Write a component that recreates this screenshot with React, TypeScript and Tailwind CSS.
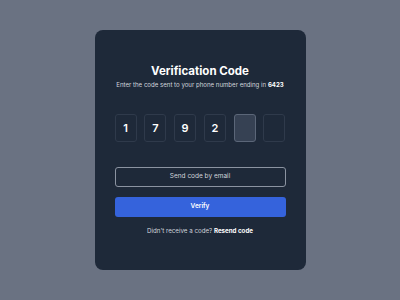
const DIGITS = ["1", "7", "9", "2", "", ""];

function OtpBox({ value, active }: { value: string; active?: boolean }) {
  return (
    <div
      className={`flex h-[28px] w-[22px] items-center justify-center rounded-[3px] border text-[11px] font-semibold text-white ${
        active ? "border-[#5b6678] bg-[#364153]" : "border-[#2f3a4b] bg-[#1e2939]"
      }`}
    >
      {value}
    </div>
  );
}

export default function App() {
  return (
    <div className="flex h-screen w-full items-center justify-center bg-[#6a7282] font-['Inter',sans-serif]">
      <div className="flex h-[240px] w-[211px] flex-col rounded-[8px] bg-[#1e2939] px-[20px] pt-[33px]">
        <h1 className="text-center text-[11.5px] font-bold leading-[16px] text-white">
          Verification Code
        </h1>
        <p className="mt-[2px] text-center text-[6.1px] leading-[8px] text-gray-300">
          Enter the code sent to your phone number ending in{" "}
          <span className="font-bold text-white">6423</span>
        </p>

        <div className="mt-[25px] flex justify-between">
          {DIGITS.map((d, i) => (
            <OtpBox key={i} value={d} active={i === 4} />
          ))}
        </div>

        <button
          type="button"
          className="mt-[25px] h-[20px] w-full rounded-[3px] border border-[#8b93a1] text-[6.5px] text-gray-300"
        >
          Send code by email
        </button>
        <button
          type="button"
          className="mt-[10px] h-[20px] w-full rounded-[3px] bg-[#3563dc] text-[6.5px] font-semibold text-white"
        >
          Verify
        </button>

        <p className="mt-[10px] text-center text-[6.2px] leading-[8px] text-gray-300">
          Didn&apos;t receive a code? <span className="font-bold text-white">Resend code</span>
        </p>
      </div>
    </div>
  );
}
